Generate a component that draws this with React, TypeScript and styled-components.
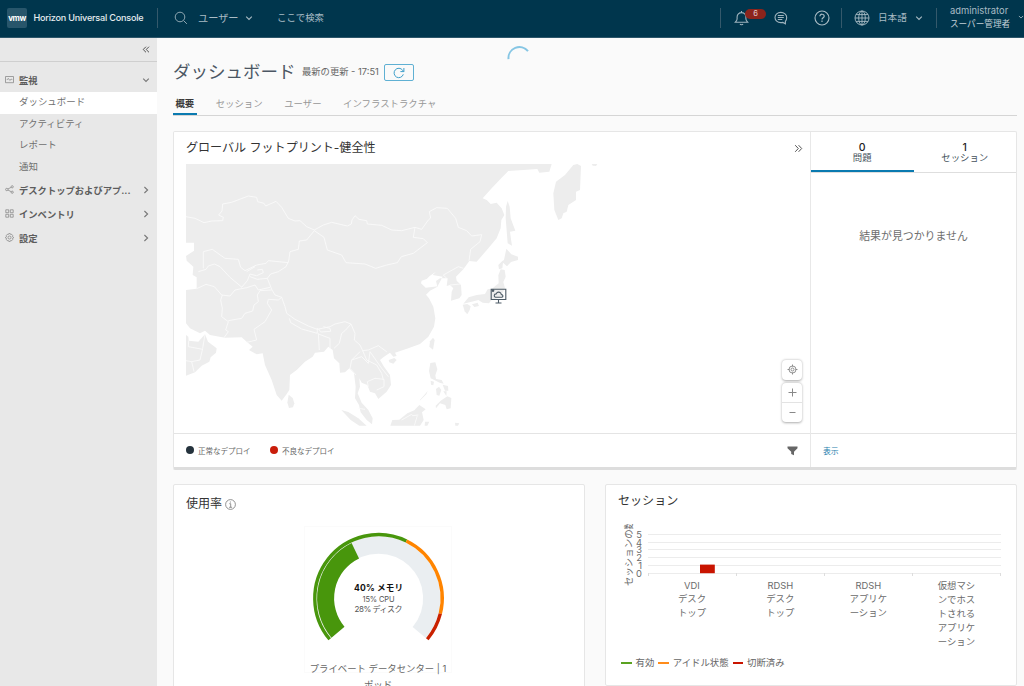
import React from "react";
import styled, { createGlobalStyle } from "styled-components";

const GlobalStyle = createGlobalStyle`
  * { box-sizing: border-box; }
  html, body { margin: 0; padding: 0; overflow: hidden; }
  body {
    font-family: Inter, "Noto Sans CJK JP", sans-serif;
    font-size: 9.35px;
    color: #666;
    background: #fafafa;
  }
`;

const Page = styled.div`
  width: 1024px;
  height: 686px;
  display: flex;
  flex-direction: column;
  overflow: hidden;
`;

/* ---------- header ---------- */
const Header = styled.header`
  height: 38px;
  flex: none;
  display: flex;
  align-items: center;
  background: #00364d;
  border-bottom: 1px solid #2c566a;
  color: #a9bcc5;
  white-space: nowrap;
`;
const Brand = styled.div`
  width: 157px;
  padding-left: 7px;
  display: flex;
  align-items: center;
  gap: 6.5px;
  color: #e6edf0;
  font-size: 9.1px;
  font-weight: 500;
  letter-spacing: -0.22px;
  margin-top: -2px;
`;
const Logo = styled.div`
  width: 20px;
  height: 20px;
  border-radius: 2px;
  background: #28566b;
  color: #fff;
  font-size: 8px;
  font-weight: 700;
  letter-spacing: -0.4px;
  display: flex;
  align-items: center;
  justify-content: center;
`;
const Divider = styled.i`
  width: 1px;
  height: 20px;
  margin-top: -2px;
  background: #35596b;
`;
const Slot = styled.div<{ $w: number; $size?: number; $pad?: number; $up?: number }>`
  width: ${(p) => p.$w}px;
  padding-left: ${(p) => p.$pad ?? 0}px;
  font-size: ${(p) => p.$size ?? 9.4}px;
  line-height: 14px;
  margin-top: ${(p) => -1 - (p.$up ?? 0)}px;
  display: flex;
  align-items: center;
  flex: none;
`;
const Spacer = styled.div`
  flex: 1;
`;
const BellSlot = styled(Slot)`
  position: relative;
`;
const Badge = styled.span`
  position: absolute;
  left: 24px;
  top: -1px;
  width: 21px;
  height: 10px;
  border-radius: 5px;
  background: #8c241c;
  color: #e3cfcd;
  font-size: 7.5px;
  line-height: 10px;
  text-align: center;
`;
const Account = styled.div`
  width: 62px;
  margin-left: 13px;
  line-height: 13.5px;
  font-size: 9.4px;
  margin-top: -2px;
`;
const Role = styled.div`
  font-size: 8.6px;
  color: #c3d0d7;
`;

/* ---------- sidebar ---------- */
const Body = styled.div`
  flex: 1;
  display: flex;
  min-height: 0;
`;
const Sidebar = styled.nav`
  width: 157px;
  flex: none;
  background: #e8e8e8;
`;
const CollapseRow = styled.div`
  height: 24px;
  border-bottom: 1px solid #cfcfcf;
  margin-bottom: 6px;
  display: flex;
  align-items: center;
  justify-content: flex-end;
  padding-right: 7px;
`;
const Group = styled.div`
  height: 24px;
  display: flex;
  align-items: center;
  padding: 0 7px 1px 5px;
  font-weight: 700;
  font-size: 9.3px;
  color: #5c5c5c;
  white-space: nowrap;
`;
const GroupLabel = styled.span`
  flex: 1;
  margin-left: 5px;
`;
const NavItem = styled.div<{ $active?: boolean }>`
  height: 21.6px;
  line-height: 20px;
  padding-left: 19px;
  font-size: 9.45px;
  color: #6f6f6f;
  background: ${(p) => (p.$active ? "#fff" : "transparent")};
`;

/* ---------- main ---------- */
const Main = styled.main`
  flex: 1;
  min-width: 0;
  position: relative;
  padding: 20px 7px 0 16px;
  background: #fafafa;
`;
const Spinner = styled.svg`
  position: absolute;
  left: 349px;
  top: 8px;
`;
const TitleRow = styled.div`
  height: 29px;
  display: flex;
  align-items: center;
  white-space: nowrap;
`;
const Title = styled.h1`
  margin: -1px 0 0;
  width: 129px;
  font-size: 17.5px;
  font-weight: 400;
  line-height: 28px;
  color: #4b5663;
`;
const Updated = styled.span`
  width: 82px;
  font-size: 9.3px;
  line-height: 16px;
  margin-top: -1px;
`;
const Refresh = styled.button`
  width: 30px;
  height: 17px;
  padding: 0;
  border: 1px solid #5fb0d3;
  border-radius: 2px;
  background: transparent;
  display: flex;
  align-items: center;
  justify-content: center;
`;
const Tabs = styled.div`
  height: 29px;
  display: flex;
  align-items: flex-end;
  gap: 16.8px;
  border-bottom: 1px solid #d5d5d5;
`;
const Tab = styled.div<{ $active?: boolean }>`
  height: 23px;
  padding: 0 2.4px;
  line-height: 23px;
  font-size: 9.4px;
  font-weight: ${(p) => (p.$active ? 700 : 400)};
  color: ${(p) => (p.$active ? "#3a3a3a" : "#979797")};
  box-shadow: ${(p) => (p.$active ? "inset 0 -2px 0 #0a7ab0" : "none")};
`;
const Card = styled.section`
  background: #fff;
  border: 1px solid #e6e6e6;
  border-radius: 2px;
`;
const Footprint = styled(Card)`
  margin-top: 15px;
  height: 339px;
  display: flex;
  border-bottom: 3px solid #dddddd;
`;
const MapSide = styled.div`
  width: 637px;
  display: flex;
  flex-direction: column;
  border-right: 1px solid #e8e8e8;
`;
const MapHead = styled.div`
  height: 32px;
  padding: 0 7px 0 12px;
  display: flex;
  align-items: center;
  justify-content: space-between;
`;
const CardTitle = styled.h2`
  margin: 0;
  font-size: 12.05px;
  font-weight: 400;
  line-height: 18px;
  color: #333;
  white-space: nowrap;
`;
const MapArea = styled.div`
  flex: 1;
  position: relative;
  padding-left: 12px;
`;
const Pin = styled.svg`
  position: absolute;
  left: 315.5px;
  top: 124px;
`;
const Controls = styled.div`
  position: absolute;
  left: 608px;
  top: 196px;
  display: flex;
  flex-direction: column;
  gap: 3px;
`;
const ControlBox = styled.div`
  width: 20px;
  border-radius: 4px;
  background: #fff;
  box-shadow: 0 0.5px 2.5px rgba(0, 0, 0, 0.33);
`;
const Control = styled.div<{ $line?: boolean }>`
  height: 19.5px;
  display: flex;
  align-items: center;
  justify-content: center;
  border-top: ${(p) => (p.$line ? "1px solid #e3e3e3" : "0")};
`;
const CardFoot = styled.div`
  height: 34px;
  flex: none;
  border-top: 1px solid #e4e4e4;
  display: flex;
  align-items: center;
  padding: 0 12px;
  font-size: 7.5px;
`;
const Legend = styled.div<{ $color: string }>`
  width: 84px;
  display: flex;
  align-items: center;
  gap: 4px;
  &::before {
    content: "";
    width: 8px;
    height: 8px;
    margin-top: -2px;
    border-radius: 50%;
    background: ${(p) => p.$color};
  }
`;
const ShowLink = styled.a`
  color: #1f7fae;
  font-size: 7.8px;
`;
const IssueSide = styled.div`
  flex: 1;
  display: flex;
  flex-direction: column;
`;
const CountTabs = styled.div`
  display: flex;
  height: 40.5px;
  border-bottom: 1px solid #dedede;
`;
const CountTab = styled.div<{ $active?: boolean }>`
  flex: 1;
  padding-top: 10.5px;
  text-align: center;
  font-size: 9.4px;
  line-height: 10px;
  color: #45525c;
  box-shadow: ${(p) => (p.$active ? "inset 0 -2px 0 #0a7ab0" : "none")};
`;
const Count = styled.div`
  font-size: 10.5px;
  font-weight: 500;
  color: #222;
`;
const Empty = styled.div`
  flex: 1;
  padding-top: 55.5px;
  text-align: center;
  font-size: 10.9px;
  line-height: 16px;
  color: #6d6d6d;
`;
const LowerRow = styled.div`
  margin-top: 14px;
  display: flex;
  gap: 20px;
`;
const Usage = styled(Card)`
  width: 412px;
  height: 230px;
  padding: 9px 12px;
`;
const UsageTitle = styled.div`
  display: flex;
  align-items: center;
  gap: 3px;
  height: 20px;
`;
const GaugeBox = styled.div`
  width: 148px;
  height: 147px;
  margin: 12px 0 0 118px;
  border: 1px solid #fbfbfb;
`;
const GaugeSvg = styled.svg`
  display: block;
  margin-left: 0.5px;
`;
const GaugeCaption = styled.div`
  margin-top: -2px;
  font-size: 9.4px;
  line-height: 16px;
  text-align: center;
`;
const Sessions = styled(Card)`
  flex: 1;
  min-width: 0;
  height: 202px;
  padding: 7px 12px 0;
`;
const SessionChart = styled.svg`
  display: block;
  margin-top: 14px;
`;
const SeriesRow = styled.div`
  display: flex;
  gap: 4px;
  margin-left: 3px;
  font-size: 9.4px;
  line-height: 16px;
`;
const Series = styled.span<{ $color: string }>`
  display: flex;
  align-items: center;
  gap: 4px;
  &::before {
    content: "";
    width: 10.5px;
    height: 2px;
    background: ${(p) => p.$color};
  }
`;

/* ---------- icons ---------- */
const Chevron = ({ down, color = "#777", size = 8 }: { down?: boolean; color?: string; size?: number }) => (
  <svg width={size} height={size} viewBox="0 0 8 8" fill="none" stroke={color} strokeWidth="1.1">
    <path d={down ? "M1.2 2.6 4 5.4 6.8 2.6" : "M2.4 1 5.6 4 2.4 7"} />
  </svg>
);
const DoubleChevron = ({ left }: { left?: boolean }) => (
  <svg width="9" height="9" viewBox="0 0 9 9" fill="none" stroke="#555" strokeWidth="1">
    <path d={left ? "M5 1.7 2.2 4.5 5 7.3M8 1.7 5.2 4.5 8 7.3" : "M1.2 1.2 4.3 4.5 1.2 7.8M4.6 1.2 7.7 4.5 4.6 7.8"} />
  </svg>
);
const SideIcon = ({ children }: { children: React.ReactNode }) => (
  <svg width="9" height="9" viewBox="0 0 9 9" fill="none" stroke="#8a8a8a" strokeWidth="0.8">
    {children}
  </svg>
);

/* ---------- map ---------- */
const LAND = [
  "M18 12H1115L1108 35 1078 38 1072 27 1030 30 985 33 965 53 935 85 908 115 920 120 932 132 950 128 965 145 973 165 964 180 962 205 950 235 925 265 890 305 868 303 850 328 828 350 830 362 843 375 845 405 838 415 813 422 815 395 820 385 810 375 800 378 803 355 780 355 768 363 772 380 788 350 758 345 768 335 750 347 740 357 725 362 723 370 737 383 775 379 750 392 738 404 747 415 760 440 766 475 762 500 745 530 720 552 685 565 645 578 650 588 640 590 630 578 612 590 600 600 612 620 630 645 633 675 620 695 595 717 585 700 570 695 562 675 545 668 538 655 540 680 533 700 545 728 565 750 578 775 576 793 560 780 542 757 537 735 525 715 527 680 522 640 508 625 495 637 480 638 478 610 462 595 458 570 445 560 432 575 405 578 398 590 375 605 350 630 330 645 328 690 318 705 305 722 290 705 275 660 255 615 248 580 230 583 207 570 218 560 200 545 185 532 135 533 90 525 75 512 60 520 30 505 18 490V390L50 386 50 352 38 345 40 320 20 302 18 288 42 272V248H18Z",
  "M18 525 25 530 26 542 55 545 75 523 84 545 110 565 108 578 92 592 88 605 65 617 45 637 18 647Z",
  "M326 704 338 714 343 730 339 742 327 744 322 728Z",
  "M626 600 643 594 650 600 640 611 628 607Z",
  "M484 750 505 756 535 775 560 797H538L512 780Z",
  "M1192 12 1203 18 1200 90 1188 95 1188 120 1165 135 1160 155 1150 160 1145 175 1135 180 1123 150 1120 100 1128 65 1155 45 1180 15Z",
  "M983 123 989 140 992 175 1006 212 990 215 993 238 996 257 983 250 977 175 978 140Z",
  "M979 266 994 283 1014 290 1014 300 993 306 981 319 969 308 967 325 957 328 955 315 967 303 972 300Z",
  "M962 328 974 330 977 350 970 366 975 385 960 412 935 420 927 430 908 428 895 420 875 425 850 431 866 412 890 405 915 402 923 388 936 386 956 370 955 346Z",
  "M848 434 862 432 872 439 869 450 862 463 854 454Z",
  "M876 433 893 428 897 438 883 441Z",
  "M759 533 764 540 759 569 748 560 750 544Z",
  "M751 609 766 607 772 628 766 646 768 657 785 660 791 671 779 668 752 655 747 633Z",
  "M752 662 762 665 760 676 753 674Z M768 687 777 680 784 690 778 707 770 705Z M788 674 804 678 805 692 795 692Z M790 694 800 694 799 708Z",
  "M767 737 782 722 802 709 814 714 812 745 800 748 796 735 780 730 768 745Z",
  "M719 721 738 699 743 693 739 703 721 721Z",
  "M631 797 637 780 658 779 682 760 703 751 718 735 737 748 726 757 731 780 720 797Z",
  "M735 785 748 785 742 797H734Z M825 788 838 790 834 797H826Z",
  "M1235 12H1252L1248 18 1238 17Z",
];
const BORDERS = [
  "M18 170 45 175 72 188 95 183 128 182 130 172 116 165 126 153 128 132 155 127 205 108 230 112 233 125 252 130 257 138 288 124 305 142 325 175 345 183 360 182 380 200 403 210 430 195 455 187 502 198 514 192 516 180 525 167 537 178 560 182 562 192 605 196 635 210 665 212 705 202 725 208 745 180 752 174 748 155 770 143 802 145 827 175 835 202 860 212 875 228 905 224 900 245 872 268 867 302",
  "M403 212 380 240 358 243 355 268 330 275 326 303 318 320 295 335 272 342 262 355 268 370 275 388 285 405 305 412 315 440 320 460 345 478 385 498 412 508 450 500 465 492 495 485 513 492 525 520 523 540 540 555 548 572 565 570 595 557 620 575",
  "M403 212 432 232 442 270 485 285 498 308 555 312 587 325 620 315 652 308 664 290 700 280 742 248 730 236 700 232 705 202",
  "M70 325V275L97 268 135 295 175 298 182 322 195 332 230 315 258 310 265 302 325 308",
  "M55 335 78 328 85 318 103 312 120 320 150 352 186 382",
  "M50 386 78 373 103 380 125 405 150 408 165 390 200 383 225 375 235 390 270 382",
  "M127 405 122 420 127 445 125 470 145 485 137 510 145 515 132 533",
  "M145 482 185 475 195 460 218 453 222 435 235 425 232 405 240 392 275 390",
  "M305 412 295 420 265 418 262 430 275 450 255 485 222 508 230 540 200 547",
  "M232 330 247 328 250 338 230 347 210 342 202 362 185 382M200 335 225 320M210 350 232 358 262 355",
  "M328 475 332 488 365 507 412 520 412 504",
  "M417 508 422 516 452 514 450 505 430 500M415 520 418 570M415 522 450 535 450 565",
  "M513 492 495 512 485 520 478 550 462 565",
  "M540 575 515 600 510 625 528 645M548 572 560 600 590 615 605 640 610 660",
  "M515 600 545 590 565 610 570 575 605 625 625 650M565 680 562 665 585 655 612 658 612 680 590 690",
  "M75 523 68 565 60 600 35 605 42 635M26 542 25 560 68 568M35 605 18 602",
  "M800 355 790 345 835 320 850 325M810 375 842 372",
  "M535 745 555 748M665 780 695 763 698 767 715 765M703 797 712 767",
];
const WorldMap = () => (
  <svg width="612" height="262" viewBox="18 12 1836 786" style={{ display: "block" }}>
    <g fill="#ededed">
      {LAND.map((d) => (
        <path key={d} d={d} />
      ))}
    </g>
    <g fill="none" stroke="#fafafa" strokeWidth="2.6" strokeLinejoin="round">
      {BORDERS.map((d) => (
        <path key={d} d={d} />
      ))}
    </g>
  </svg>
);

/* ---------- gauge ---------- */
const point = (r: number, deg: number) => {
  const a = (deg * Math.PI) / 180;
  return `${(r * Math.sin(a)).toFixed(2)} ${(-r * Math.cos(a)).toFixed(2)}`;
};
const arc = (r: number, from: number, to: number) =>
  `M${point(r, from)}A${r} ${r} 0 ${to - from > 180 ? 1 : 0} 1 ${point(r, to)}`;

const Gauge = () => (
  <GaugeSvg width="145" height="136" viewBox="-72.5 -71.3 145 136" fill="none">
    <path d={arc(53.2, -130, 130)} stroke="#eaeef1" strokeWidth="17.2" />
    <path d={arc(52.9, -130, -26)} stroke="#48960c" strokeWidth="17" />
    <path d={arc(63.7, -130, 26)} stroke="#48960c" strokeWidth="3.4" />
    <path d={arc(63.7, 26, 104)} stroke="#ff8400" strokeWidth="3.4" />
    <path d={arc(63.7, 104, 130)} stroke="#c92100" strokeWidth="3.4" />
    <g textAnchor="middle" fill="#555" fontSize="8">
      <text x="0" y="-7.2" fontSize="8.6" fontWeight="700" fill="#111" textLength="49">40% メモリ</text>
      <text x="0" y="3.4" fontSize="7.5" textLength="32">15% CPU</text>
      <text x="0" y="14.2" textLength="48">28% ディスク</text>
    </g>
  </GaugeSvg>
);

/* ---------- sessions chart ---------- */
const CATEGORIES = [
  { x: 692, lines: ["VDI", "デスク", "トップ"] },
  { x: 780.3, lines: ["RDSH", "デスク", "トップ"] },
  { x: 868.3, lines: ["RDSH", "アプリケ", "ーション"] },
  { x: 956.4, lines: ["仮想マシ", "ンでホス", "トされる", "アプリケ", "ーション"] },
];
const TICKS = [534.5, 542.5, 549.5, 557.5, 565.5, 573.5];
const Chart = () => (
  <SessionChart width="386" height="131" viewBox="618 524 386 131">
    <g stroke="#ececec">
      {TICKS.map((y) => (
        <path key={y} d={`M648 ${y}H1001`} />
      ))}
      {[648.5, 736.5, 824.5, 912.5, 1000.5].map((x) => (
        <path key={x} d={`M${x} 573V576`} stroke="#ddd" />
      ))}
    </g>
    <rect x="700" y="564.6" width="14.8" height="8.6" fill="#c91400" />
    <g fill="#6b6b6b" fontSize="9.4">
      {TICKS.map((y, i) => (
        <text key={y} x="642" y={y + 3.3} textAnchor="end">
          {5 - i}
        </text>
      ))}
      <text transform="translate(631.8 586) rotate(-90)" textLength="66">
        セッションの数
      </text>
      {CATEGORIES.map((c) => (
        <g key={c.x} textAnchor="middle">
          {c.lines.map((line, i) => (
            <text key={line} x={c.x} y={(c.lines.length > 3 || i === 0 ? 589.2 : 587.6) + i * 13.95}>
              {line}
            </text>
          ))}
        </g>
      ))}
    </g>
  </SessionChart>
);

export default function App() {
  return (
    <Page>
      <GlobalStyle />
      <Header>
        <Brand>
          <Logo>vmw</Logo>
          <span>Horizon Universal Console</span>
        </Brand>
        <Divider />
        <Slot $w={40} $pad={16}>
          <svg width="14" height="14" viewBox="0 0 14 14" fill="none" stroke="#8fa7b2" strokeWidth="1">
            <circle cx="6" cy="6" r="4.8" />
            <path d="m9.500 9.500 3.400 3.400" />
          </svg>
        </Slot>
        <Slot $w={47} $size={10.2} $up={1}>ユーザー</Slot>
        <Slot $w={32}>
          <Chevron down color="#a9bcc5" />
        </Slot>
        <Slot $w={60}>ここで検索</Slot>
        <Spacer />
        <Divider />
        <BellSlot $w={53} $pad={13}>
          <svg width="15" height="16" viewBox="0 0 15 16" fill="none" stroke="#9fb4be" strokeWidth="1.1">
            <path d="M7.5 1v1.6M1.2 12.3h12.6c-1-1-1.9-1.7-1.9-3.2V7a4.4 4.4 0 0 0-8.8 0v2.1c0 1.5-.9 2.2-1.9 3.2Z" />
            <path d="M6 14a1.6 1.2 0 0 0 3 0" />
          </svg>
          <Badge>6</Badge>
        </BellSlot>
        <Slot $w={40}>
          <svg width="14" height="14" viewBox="0 0 14 14" fill="none" stroke="#9fb4be" strokeWidth="1.1">
            <path d="M11.4 10.4v2.4l-2.6-1.4a8 8 0 0 1-2 .2C3.5 11.6 1 9.3 1 6.4s2.5-5 5.800-5 5.900 2.100 5.900 5c0 1.600-.5 2.900-1.300 4Z" />
            <path d="M3.800 4.500h6M3.800 6.500h6M3.800 8.500h4.500" />
          </svg>
        </Slot>
        <Slot $w={27}>
          <svg width="16" height="16" viewBox="0 0 16 16" fill="none" stroke="#a9bcc5" strokeWidth="1.1">
            <circle cx="8" cy="8" r="7" />
            <path d="M5.900 6.300c0-2.900 4.300-2.600 4.300-.1 0 1.600-2.200 1.600-2.200 3.300M8 10.600v1.300" strokeWidth="1.2" />
          </svg>
        </Slot>
        <Divider />
        <Slot $w={36} $pad={12}>
          <svg width="16" height="16" viewBox="0 0 16 16" fill="none" stroke="#a9bcc5" strokeWidth="0.9">
            <circle cx="8" cy="8" r="7" />
            <ellipse cx="8" cy="8" rx="3.3" ry="7" />
            <path d="M1 8h14M8 1v14M2 4.600h12M2 11.400h12" />
          </svg>
        </Slot>
        <Slot $w={37} $size={9.6} $up={1}>日本語</Slot>
        <Slot $w={21}>
          <Chevron down color="#a9bcc5" />
        </Slot>
        <Divider />
        <Account>
          administrator
          <Role>スーパー管理者</Role>
        </Account>
        <Slot $w={12} $pad={6} $up={3}>
          <Chevron down color="#a9bcc5" />
        </Slot>
      </Header>
      <Body>
        <Sidebar>
          <CollapseRow>
            <DoubleChevron left />
          </CollapseRow>
          <Group>
            <SideIcon>
              <path d="M.5 1.5h8v6.200h-8zM1.800 5l1.500-1.600 1.500 2L6.300 4l1 1" />
            </SideIcon>
            <GroupLabel>監視</GroupLabel>
            <Chevron down />
          </Group>
          <NavItem $active>ダッシュボード</NavItem>
          <NavItem>アクティビティ</NavItem>
          <NavItem>レポート</NavItem>
          <NavItem>通知</NavItem>
          <Group>
            <SideIcon>
              <circle cx="1.8" cy="4.5" r="1.2" />
              <circle cx="7.2" cy="1.8" r="1.1" />
              <circle cx="7.2" cy="7.2" r="1.1" />
              <path d="m2.900 4 3.300-1.700M2.900 5l3.300 1.700" />
            </SideIcon>
            <GroupLabel>デスクトップおよびアプ...</GroupLabel>
            <Chevron />
          </Group>
          <Group>
            <SideIcon>
              <path d="M.8.8h2.900v2.900H.8zM5.300.8h2.900v2.900H5.300zM.8 5.300h2.900v2.900H.8zM5.300 5.300h2.900v2.900H5.300z" />
            </SideIcon>
            <GroupLabel>インベントリ</GroupLabel>
            <Chevron />
          </Group>
          <Group>
            <SideIcon>
              <circle cx="4.5" cy="4.5" r="1.5" />
              <path d="m3.700.6 1.600 0 .4 1 1-.3 1 1.200-.4 1 1.100.6v1l-1.100.5.4 1-1 1.100-1-.3-.4 1H3.700l-.4-1-1 .3-1-1.100.4-1-1.100-.5v-1l1.100-.6-.4-1 1-1.200 1 .3Z" />
            </SideIcon>
            <GroupLabel>設定</GroupLabel>
            <Chevron />
          </Group>
        </Sidebar>
        <Main>
          <Spinner width="24" height="24" viewBox="0 0 24 24" fill="none">
            <path d="M2.500 13.200A11 11 0 0 1 22 5.200" stroke="#86c6e4" strokeWidth="2" />
          </Spinner>
          <TitleRow>
            <Title>ダッシュボード</Title>
            <Updated>最新の更新 - 17:51</Updated>
            <Refresh aria-label="更新">
              <svg width="12" height="12" viewBox="0 0 12 12" fill="none" stroke="#3f9fca" strokeWidth="1">
                <path d="M10.300 7.300A4.700 4.700 0 1 1 9.600 3.200L10.800 4.500M10.900 1v3.600H7.400" />
              </svg>
            </Refresh>
          </TitleRow>
          <Tabs>
            <Tab $active>概要</Tab>
            <Tab>セッション</Tab>
            <Tab>ユーザー</Tab>
            <Tab>インフラストラクチャ</Tab>
          </Tabs>
          <Footprint>
            <MapSide>
              <MapHead>
                <CardTitle>グローバル フットプリント-健全性</CardTitle>
                <DoubleChevron />
              </MapHead>
              <MapArea>
                <WorldMap />
                <Pin width="17" height="17" viewBox="0 0 17 17" fill="none" stroke="#4d5b66" strokeWidth="1.1">
                  <path d="M1.200 1.300h14.600v10.200H1.200zM8.500 11.500v3M5.500 15h6" />
                  <path d="M5.500 9.300h6.300c1.800-.5 1.300-2.800-.4-2.700-.5-3-4.200-3.400-5.200-.7-2.300-.1-2.600 3-.7 3.400Z" />
                  <circle cx="3" cy="2.600" r="0.8" fill="#4d5b66" />
                </Pin>
                <Controls>
                  <ControlBox>
                    <Control>
                      <svg width="11" height="11" viewBox="0 0 11 11" fill="none" stroke="#777" strokeWidth="0.8">
                        <circle cx="5.500" cy="5.500" r="3.500" />
                        <circle cx="5.500" cy="5.500" r="1.500" />
                        <path d="M5.500 .5v2M5.500 8.500v2M.5 5.500h2M8.500 5.500h2" />
                      </svg>
                    </Control>
                  </ControlBox>
                  <ControlBox>
                    <Control>
                      <svg width="9" height="9" viewBox="0 0 9 9" stroke="#888">
                        <path d="M.5 4.500h8M4.500 .5v8" />
                      </svg>
                    </Control>
                    <Control $line>
                      <svg width="7" height="3" viewBox="0 0 7 3" stroke="#888">
                        <path d="M.5 1.500h6" />
                      </svg>
                    </Control>
                  </ControlBox>
                </Controls>
              </MapArea>
              <CardFoot>
                <Legend $color="#25333d">正常なデプロイ</Legend>
                <Legend $color="#c91d0a">不良なデプロイ</Legend>
                <Spacer />
                <svg width="11" height="10" viewBox="0 0 11 10" fill="#666">
                  <path d="M.5.5h10v1.800L7 5.800v3.400L4.200 8V5.800L.5 2.300Z" />
                </svg>
              </CardFoot>
            </MapSide>
            <IssueSide>
              <CountTabs>
                <CountTab $active>
                  <Count>0</Count>問題
                </CountTab>
                <CountTab>
                  <Count>1</Count>セッション
                </CountTab>
              </CountTabs>
              <Empty>結果が見つかりません</Empty>
              <CardFoot>
                <ShowLink>表示</ShowLink>
              </CardFoot>
            </IssueSide>
          </Footprint>
          <LowerRow>
            <Usage>
              <UsageTitle>
                <CardTitle>使用率</CardTitle>
                <svg width="11" height="11" viewBox="0 0 11 11" fill="none" stroke="#777" strokeWidth="0.8">
                  <circle cx="5.500" cy="5.500" r="4.900" />
                  <path d="M4.300 4.700h1.400v3.500M4.100 8.300h3M5.400 2.500v1.100" />
                </svg>
              </UsageTitle>
              <GaugeBox>
                <Gauge />
                <GaugeCaption>プライベート データセンター | 1 ポッド</GaugeCaption>
              </GaugeBox>
            </Usage>
            <Sessions>
              <CardTitle>セッション</CardTitle>
              <Chart />
              <SeriesRow>
                <Series $color="#5aa220">有効</Series>
                <Series $color="#ff8c1a">アイドル状態</Series>
                <Series $color="#c91400">切断済み</Series>
              </SeriesRow>
            </Sessions>
          </LowerRow>
        </Main>
      </Body>
    </Page>
  );
}
